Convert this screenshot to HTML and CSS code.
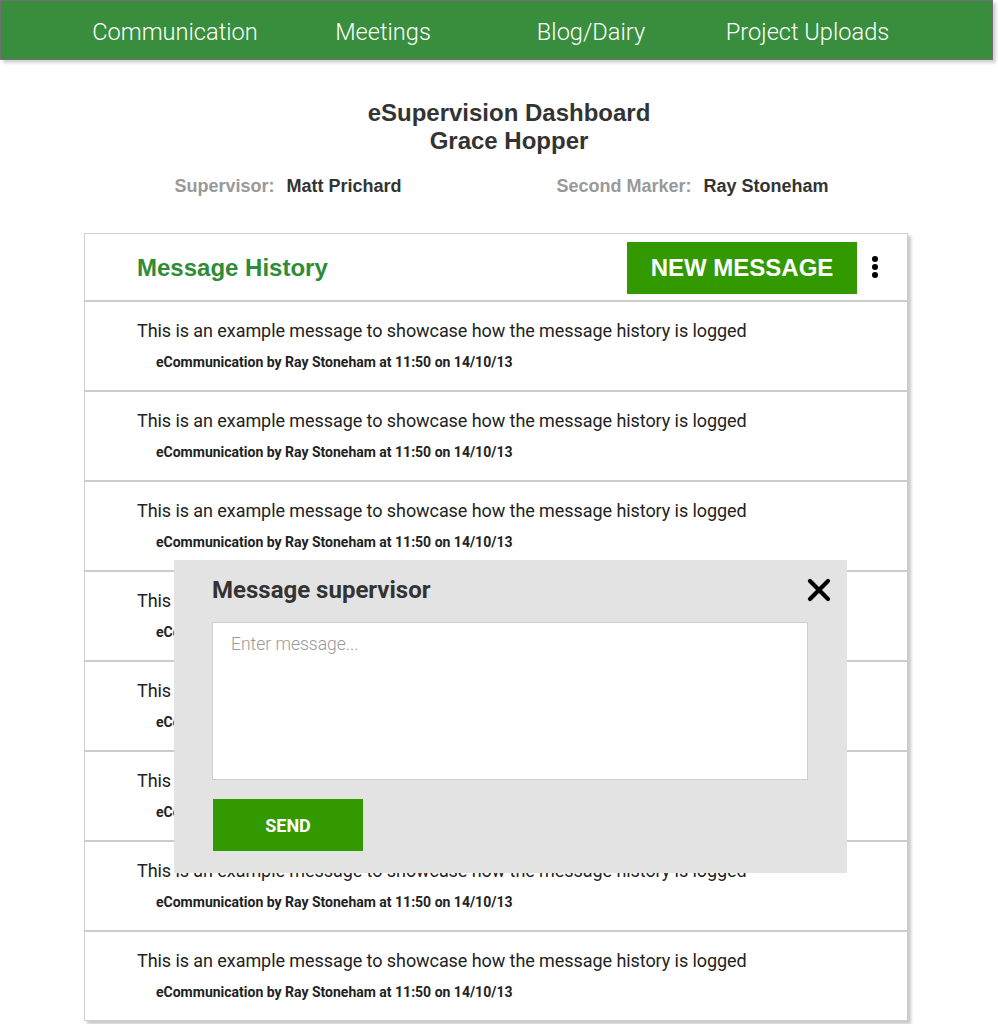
FILE: index.html
```html
<!DOCTYPE html>
<html>
<head>
<meta charset="utf-8">
<title>eSupervision Dashboard</title>
<link rel="stylesheet" href="styles.css">
</head>
<body>
<nav class="topnav">
  <a class="nav-item">Communication</a>
  <a class="nav-item">Meetings</a>
  <a class="nav-item">Blog/Dairy</a>
  <a class="nav-item nav-last">Project Uploads</a>
</nav>

<header class="page-head">
  <h1 class="title">eSupervision Dashboard<br>Grace Hopper</h1>
  <div class="people">
    <div class="person"><span class="label">Supervisor:</span><span class="name">Matt Prichard</span></div>
    <div class="person"><span class="label">Second Marker:</span><span class="name">Ray Stoneham</span></div>
  </div>
</header>

<section class="card">
  <div class="card-head">
    <h2 class="card-title">Message History</h2>
    <button class="btn-new">NEW MESSAGE</button>
    <svg class="kebab" width="6" height="22" viewBox="0 0 6 22"><circle cx="3" cy="3" r="3"/><circle cx="3" cy="11" r="3"/><circle cx="3" cy="19" r="3"/></svg>
  </div>
  <div class="msg"><p class="msg-text">This is an example message to showcase how the message history is logged</p><p class="msg-meta">eCommunication by Ray Stoneham at 11:50 on 14/10/13</p></div>
  <div class="msg"><p class="msg-text">This is an example message to showcase how the message history is logged</p><p class="msg-meta">eCommunication by Ray Stoneham at 11:50 on 14/10/13</p></div>
  <div class="msg"><p class="msg-text">This is an example message to showcase how the message history is logged</p><p class="msg-meta">eCommunication by Ray Stoneham at 11:50 on 14/10/13</p></div>
  <div class="msg"><p class="msg-text">This is an example message to showcase how the message history is logged</p><p class="msg-meta">eCommunication by Ray Stoneham at 11:50 on 14/10/13</p></div>
  <div class="msg"><p class="msg-text">This is an example message to showcase how the message history is logged</p><p class="msg-meta">eCommunication by Ray Stoneham at 11:50 on 14/10/13</p></div>
  <div class="msg"><p class="msg-text">This is an example message to showcase how the message history is logged</p><p class="msg-meta">eCommunication by Ray Stoneham at 11:50 on 14/10/13</p></div>
  <div class="msg"><p class="msg-text">This is an example message to showcase how the message history is logged</p><p class="msg-meta">eCommunication by Ray Stoneham at 11:50 on 14/10/13</p></div>
  <div class="msg msg-last"><p class="msg-text">This is an example message to showcase how the message history is logged</p><p class="msg-meta">eCommunication by Ray Stoneham at 11:50 on 14/10/13</p></div>
</section>

<div class="modal">
  <div class="modal-head">
    <h3 class="modal-title">Message supervisor</h3>
    <svg class="close" width="24" height="24" viewBox="0 0 24 24"><path d="M3 3 L21 21 M21 3 L3 21" stroke="#000" stroke-width="4.2" stroke-linecap="round" fill="none"/></svg>
  </div>
  <textarea class="modal-input" placeholder="Enter message..."></textarea>
  <button class="btn-send">SEND</button>
</div>
</body>
</html>
```

FILE: styles.css
```css
html, body {
  margin: 0;
  padding: 0;
  background: #fff;
}
body {
  font-family: "Liberation Sans", Arial, sans-serif;
  color: #333;
  position: relative;
  height: 1024px;
  overflow: hidden;
}

.topnav {
  box-sizing: border-box;
  width: 993px;
  height: 60px;
  background: #388e3c;
  border: 1px solid #707070;
  box-shadow: 3px 3px 3px rgba(0,0,0,0.18);
  display: grid;
  grid-template-columns: 208px 208px 208px 208px;
  padding: 3px 0 0 70px;
  align-items: center;
}
.nav-item {
  font-family: Roboto, sans-serif;
  font-weight: 300;
  font-size: 23.6px;
  color: #fff;
  text-align: center;
  white-space: nowrap;
}
.nav-last {
  padding-left: 17px;
}

.page-head {
  margin-left: 20px;
  text-align: center;
  padding-top: 39px;
}
.title {
  margin: 0;
  font-size: 24px;
  line-height: 28px;
  font-weight: bold;
  color: #333;
}
.people {
  display: flex;
  justify-content: center;
  gap: 155px;
  margin-top: 21px;
  margin-left: -15px;
  font-size: 18px;
  font-weight: bold;
  line-height: 20px;
}
.person {
  display: flex;
  gap: 12px;
}
.label {
  color: #999;
}
.name {
  color: #333;
}

.card {
  box-sizing: border-box;
  width: 824px;
  margin: 37px 0 0 84px;
  border: 1px solid #cfcfcf;
  box-shadow: 3px 3px 3px rgba(0,0,0,0.22);
  background: #fff;
}
.card-head {
  display: flex;
  align-items: center;
  height: 66px;
  padding: 0 29px 0 52px;
  border-bottom: 2px solid #cccccc;
}
.card-title {
  flex: 1;
  margin: 2px 0 0 0;
  font-size: 24px;
  font-weight: bold;
  color: #2e8b37;
}
.btn-new {
  width: 230px;
  height: 52px;
  border: none;
  background: #339900;
  color: #fff;
  font-family: "Liberation Sans", Arial, sans-serif;
  font-size: 24px;
  font-weight: bold;
  padding: 0;
  margin-top: 1px;
}
.kebab {
  margin-left: 15px;
  fill: #000;
}

.msg {
  box-sizing: border-box;
  height: 90px;
  padding: 18px 0 0 52px;
  border-bottom: 2px solid #cccccc;
}
.msg-last {
  border-bottom: none;
  height: 88px;
}
.msg-text {
  margin: 0;
  font-family: Roboto, sans-serif;
  font-size: 18px;
  line-height: 22px;
  letter-spacing: -0.07px;
  color: #222;
}
.msg-meta {
  margin: 11px 0 0 19px;
  font-family: Roboto, sans-serif;
  font-size: 14px;
  font-weight: bold;
  line-height: 18px;
  color: #222;
}

.modal {
  position: absolute;
  left: 174px;
  top: 560px;
  width: 673px;
  height: 313px;
  box-sizing: border-box;
  background: #e3e3e3;
  padding: 17px 17px 0 38px;
  display: flex;
  flex-direction: column;
  align-items: flex-start;
}
.modal-head {
  display: flex;
  align-items: center;
  justify-content: space-between;
  align-self: stretch;
  height: 26px;
}
.modal-title {
  margin: 0;
  font-family: Roboto, sans-serif;
  font-size: 24px;
  font-weight: bold;
  color: #333;
}
.close {
  margin-right: -1px;
}
.modal-input {
  box-sizing: border-box;
  width: 596px;
  height: 158px;
  margin-top: 19px;
  border: 1px solid #cfcfcf;
  background: #fff;
  resize: none;
  padding: 11px 18px;
  font-family: Roboto, sans-serif;
  font-weight: 300;
  font-size: 17.5px;
  outline: none;
}
.modal-input::placeholder {
  color: #999;
}
.btn-send {
  margin-top: 19px;
  margin-left: 1px;
  width: 150px;
  height: 52px;
  border: none;
  background: #339900;
  color: #fff;
  font-family: Roboto, sans-serif;
  font-size: 18px;
  font-weight: bold;
  padding: 0;
}
```
